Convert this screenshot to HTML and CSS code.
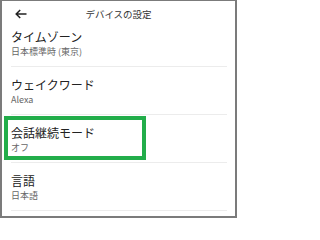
FILE: index.html
```html
<!DOCTYPE html>
<html lang="ja">
<head>
<meta charset="utf-8">
<link rel="stylesheet" href="styles.css">
</head>
<body>
<div class="frame">
  <header class="header">
    <svg class="back" width="12" height="10" viewBox="0 0 12 10" aria-hidden="true">
      <path d="M11.5 5H1.2M5.2 1L1.2 5l4 4" fill="none" stroke="#222" stroke-width="1.5"/>
    </svg>
    <div class="header-title">デバイスの設定</div>
  </header>
  <ul class="list">
    <li class="row">
      <div class="title">タイムゾーン</div>
      <div class="sub">日本標準時 (東京)</div>
    </li>
    <li class="row">
      <div class="title">ウェイクワード</div>
      <div class="sub">Alexa</div>
    </li>
    <li class="row">
      <div class="highlight"></div>
      <div class="title">会話継続モード</div>
      <div class="sub">オフ</div>
    </li>
    <li class="row">
      <div class="title">言語</div>
      <div class="sub">日本語</div>
    </li>
  </ul>
</div>
</body>
</html>
```
FILE: styles.css
```css
* { box-sizing: border-box; }
html, body { margin: 0; padding: 0; background: #fff; }
body { font-family: "Noto Sans CJK JP", "Noto Sans", sans-serif; }
.frame {
  width: 237px;
  height: 218px;
  border: 2px solid #7b7b7b;
  border-top-width: 1px;
  background: #fff;
  overflow: hidden;
}
.header {
  position: relative;
  height: 18px;
  display: flex;
  align-items: center;
  justify-content: center;
}
.back {
  position: absolute;
  left: 13px;
  top: 8px;
}
.header-title {
  font-size: 9.5px;
  line-height: 12px;
  color: #333;
  margin-top: 8px;
}
.list {
  list-style: none;
  margin: 0;
  padding: 0 8px 0 9px;
}
.row {
  position: relative;
  height: 48px;
  padding-top: 10px;
  border-bottom: 1px solid #ececec;
}
.title {
  font-size: 12px;
  line-height: 15px;
  color: #222;
}
.sub {
  margin-top: 2px;
  font-size: 9px;
  line-height: 11px;
  color: #666;
}
.highlight {
  position: absolute;
  left: -7px;
  top: 1px;
  width: 142px;
  height: 44px;
  border: 4px solid #22ad4a;
}
```
